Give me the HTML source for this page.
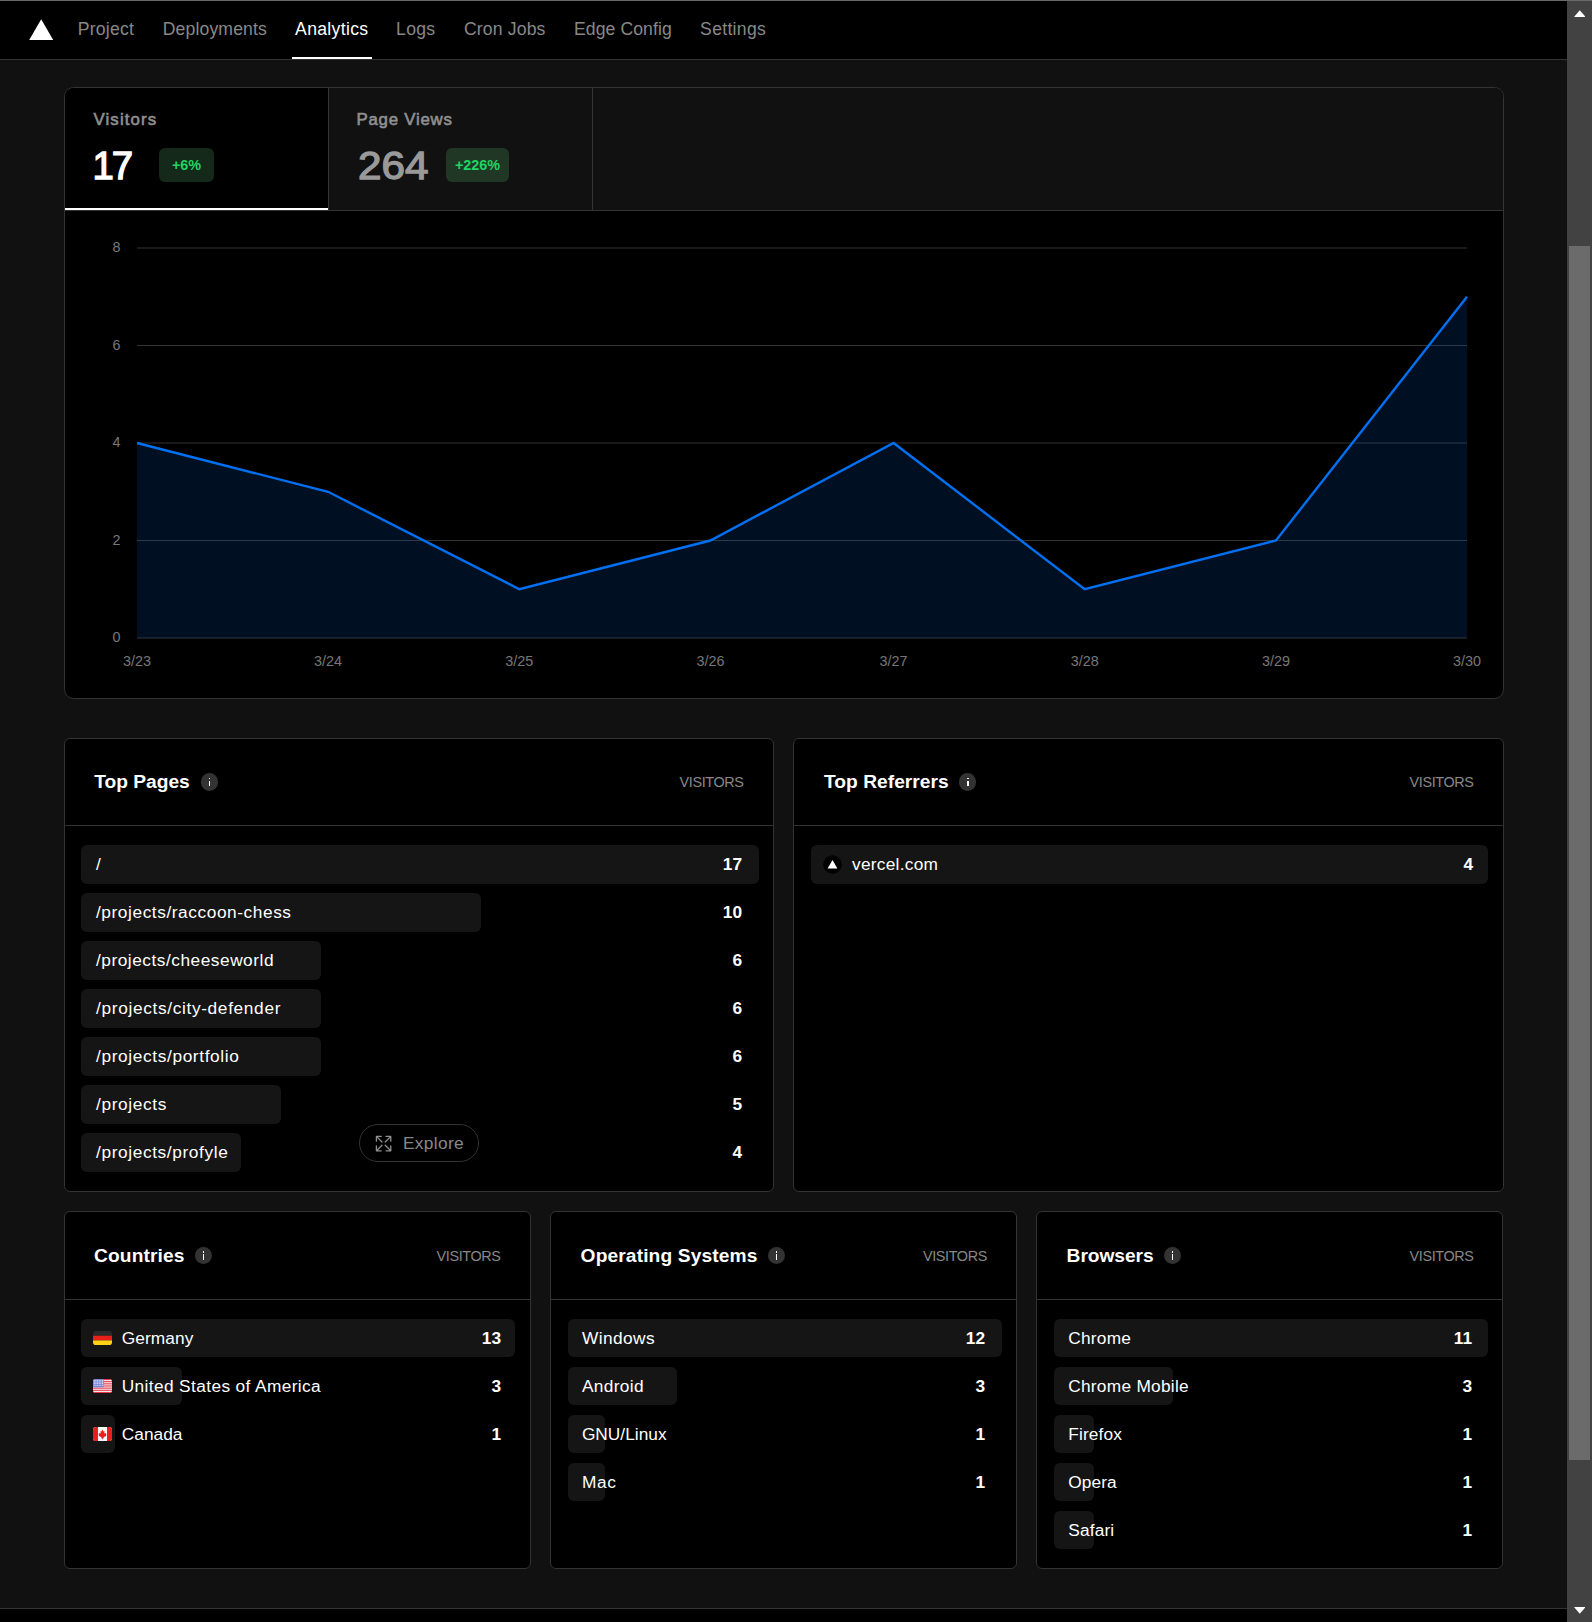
<!DOCTYPE html>
<html lang="en">
<head>
<meta charset="utf-8">
<title>Analytics</title>
<style>
*{box-sizing:border-box;margin:0;padding:0}
html,body{width:1592px;height:1622px;overflow:hidden;background:#111}
body{position:relative;font-family:"Liberation Sans",sans-serif;color:#fff}
.abs{position:absolute}
.t{position:absolute;white-space:nowrap;line-height:20px}
#topline{left:0;top:0;width:1592px;height:1px;background:#67696d}
#hdr{left:0;top:1px;width:1567px;height:59px;background:#000;border-bottom:1px solid #333}
.nav{font-size:17.6px;color:#888;top:18.6px}
.nav.on{color:#fff}
#navline{left:292px;top:57px;width:80px;height:2px;background:#fff}
#sb{left:1567px;top:1px;width:25px;height:1621px;background:#424242}
#sbthumb{left:1569px;top:246px;width:21px;height:1214px;background:#6b6b6b}
#ftr{left:0;top:1608px;width:1567px;height:14px;background:#000;border-top:1px solid #333}
.card{position:absolute;background:#000;border:1px solid #333;border-radius:6px}
.sep{position:absolute;left:0;right:0;height:1px;background:#333}
.title{font-size:19.2px;font-weight:700;color:#fff}
.vis{font-size:14.4px;color:#888;letter-spacing:-.35px}
.info{position:absolute;width:17.4px;height:17.4px;border-radius:50%;background:#333}
.info:before{content:"";position:absolute;left:8px;top:4.6px;width:1.5px;height:1.7px;background:#fff}
.info:after{content:"";position:absolute;left:8px;top:7.7px;width:1.5px;height:5.4px;background:#fff}
.bar{position:absolute;height:38px;background:#151515;border-radius:6px}
.lbl{font-size:17.3px;color:#fff}
.num{font-size:17.3px;font-weight:700;color:#fff;text-align:right}
.mlab{font-size:16.8px;font-weight:400;color:#909090;-webkit-text-stroke:.6px #909090}
.mnum{font-size:38.4px;font-weight:400;line-height:44px;-webkit-text-stroke:1.3px currentColor;paint-order:stroke fill}
.badge{position:absolute;height:34px;border-radius:6px;text-align:center;font-size:14.4px;font-weight:700;color:#20d465;line-height:34px}
.ax{font-size:14.4px;color:#777}
</style>
</head>
<body>
<div id="topline" class="abs"></div>
<div id="hdr" class="abs"></div>
<svg class="abs" style="left:29px;top:19px" width="25" height="22" viewBox="0 0 25 22"><path d="M12.2 0.2 L24.2 21 L0.2 21 Z" fill="#fff"/></svg>
<div class="t nav" id="nav0" style="left:77.7px;letter-spacing:0.256px;">Project</div>
<div class="t nav" id="nav1" style="left:162.7px;letter-spacing:0.151px;">Deployments</div>
<div class="t nav on" id="nav2" style="left:295.1px;letter-spacing:0.324px;">Analytics</div>
<div class="t nav" id="nav3" style="left:396.1px;letter-spacing:0.248px;">Logs</div>
<div class="t nav" id="nav4" style="left:463.9px;letter-spacing:0.164px;">Cron Jobs</div>
<div class="t nav" id="nav5" style="left:574.0px;letter-spacing:0.086px;">Edge Config</div>
<div class="t nav" id="nav6" style="left:700.1px;letter-spacing:0.303px;">Settings</div>
<div id="navline" class="abs"></div>
<div class="card" style="left:64px;top:87px;width:1440px;height:612px;overflow:hidden;border-radius:9.6px">
<div class="abs" style="left:0;top:0;width:1438px;height:122px;background:#111"></div>
<div class="abs" style="left:0;top:0;width:263px;height:122px;background:#000"></div>
<div class="abs" style="left:263px;top:0;width:1px;height:122px;background:#333"></div>
<div class="abs" style="left:527px;top:0;width:1px;height:122px;background:#333"></div>
<div class="abs" style="left:0;top:122px;width:1438px;height:1px;background:#333"></div>
<div class="abs" style="left:0;top:120px;width:263px;height:2px;background:#fff"></div>
</div>
<div class="t mlab" id="m_vis" style="left:93.5px;top:109.7px;letter-spacing:1.126px;">Visitors</div>
<div class="t mnum" id="m_17" style="left:92.5px;top:143.9px;color:#fff;letter-spacing:-2.003px;">17</div>
<div class="badge" style="left:159px;top:148px;width:55px;background:#14291a"><span>+6%</span></div>
<div class="t mlab" id="m_pv" style="left:356.5px;top:109.7px;letter-spacing:0.786px;">Page Views</div>
<div class="t mnum" id="m_264" style="left:357.6px;top:143.6px;color:#999;transform:scaleX(1.1);transform-origin:0 0;letter-spacing:0.000px;">264</div>
<div class="badge" style="left:446px;top:148px;width:63px;background:#213726"><span>+226%</span></div>
<svg class="abs" style="left:0;top:211px" width="1567" height="487" viewBox="0 211 1567 487">
<line x1="137" x2="1467" y1="638.0" y2="638.0" stroke="#333" stroke-width="1.2"/><line x1="137" x2="1467" y1="540.5" y2="540.5" stroke="#333" stroke-width="1.2"/><line x1="137" x2="1467" y1="443.0" y2="443.0" stroke="#333" stroke-width="1.2"/><line x1="137" x2="1467" y1="345.5" y2="345.5" stroke="#333" stroke-width="1.2"/><line x1="137" x2="1467" y1="248.0" y2="248.0" stroke="#333" stroke-width="1.2"/>
<polygon points="137.0,443.0 328.1,491.8 519.3,589.2 710.4,540.5 893.6,443.0 1084.7,589.2 1275.9,540.5 1467.0,296.8 1467,638.0 137,638.0" fill="rgba(0,112,243,0.14)"/>
<polyline points="137.0,443.0 328.1,491.8 519.3,589.2 710.4,540.5 893.6,443.0 1084.7,589.2 1275.9,540.5 1467.0,296.8" fill="none" stroke="#0070f3" stroke-width="2.4" stroke-linejoin="miter"/>
</svg>
<div class="t ax" style="left:90px;width:30.5px;text-align:right;top:627.2px">0</div>
<div class="t ax" style="left:90px;width:30.5px;text-align:right;top:529.7px">2</div>
<div class="t ax" style="left:90px;width:30.5px;text-align:right;top:432.2px">4</div>
<div class="t ax" style="left:90px;width:30.5px;text-align:right;top:334.7px">6</div>
<div class="t ax" style="left:90px;width:30.5px;text-align:right;top:237.2px">8</div>
<div class="t ax" style="left:107.0px;width:60px;text-align:center;top:651px">3/23</div>
<div class="t ax" style="left:298.1px;width:60px;text-align:center;top:651px">3/24</div>
<div class="t ax" style="left:489.3px;width:60px;text-align:center;top:651px">3/25</div>
<div class="t ax" style="left:680.4px;width:60px;text-align:center;top:651px">3/26</div>
<div class="t ax" style="left:863.6px;width:60px;text-align:center;top:651px">3/27</div>
<div class="t ax" style="left:1054.7px;width:60px;text-align:center;top:651px">3/28</div>
<div class="t ax" style="left:1245.9px;width:60px;text-align:center;top:651px">3/29</div>
<div class="t ax" style="left:1437.0px;width:60px;text-align:center;top:651px">3/30</div>
<div class="card" style="left:64px;top:738px;width:710px;height:454px"><div class="sep" style="top:86px"></div></div>
<div class="t title" id="tp_t" style="left:94.2px;top:772px;letter-spacing:-0.001px;">Top Pages</div>
<div class="info" style="left:200.7px;top:773.2px"></div>
<div class="t vis" style="right:848.4px;top:772px">VISITORS</div>
<div class="bar" style="left:81px;top:845px;width:677.8px;height:39px"></div>
<div class="t lbl" id="tp_r0" style="left:96.0px;top:853.8px;letter-spacing:0.000px;">/</div>
<div class="t num" style="right:850px;top:854.4px">17</div>
<div class="bar" style="left:81px;top:893px;width:400.4px;height:39px"></div>
<div class="t lbl" id="tp_r1" style="left:96.0px;top:901.8px;letter-spacing:0.568px;">/projects/raccoon-chess</div>
<div class="t num" style="right:850px;top:902.4px">10</div>
<div class="bar" style="left:81px;top:941px;width:239.9px;height:39px"></div>
<div class="t lbl" id="tp_r2" style="left:96.0px;top:949.8px;letter-spacing:0.518px;">/projects/cheeseworld</div>
<div class="t num" style="right:850px;top:950.4px">6</div>
<div class="bar" style="left:81px;top:989px;width:239.9px;height:39px"></div>
<div class="t lbl" id="tp_r3" style="left:96.0px;top:997.8px;letter-spacing:0.654px;">/projects/city-defender</div>
<div class="t num" style="right:850px;top:998.4px">6</div>
<div class="bar" style="left:81px;top:1037px;width:239.9px;height:39px"></div>
<div class="t lbl" id="tp_r4" style="left:96.0px;top:1045.8px;letter-spacing:0.628px;">/projects/portfolio</div>
<div class="t num" style="right:850px;top:1046.4px">6</div>
<div class="bar" style="left:81px;top:1085px;width:200.1px;height:39px"></div>
<div class="t lbl" id="tp_r5" style="left:96.0px;top:1093.8px;letter-spacing:0.623px;">/projects</div>
<div class="t num" style="right:850px;top:1094.4px">5</div>
<div class="bar" style="left:81px;top:1133px;width:160.2px;height:39px"></div>
<div class="t lbl" id="tp_r6" style="left:96.0px;top:1141.8px;letter-spacing:0.613px;">/projects/profyle</div>
<div class="t num" style="right:850px;top:1142.4px">4</div>
<div class="abs" style="left:359px;top:1124px;width:120px;height:38px;border:1px solid #333;border-radius:19px"></div>
<svg class="abs" style="left:373.9px;top:1133.9px" width="19.2" height="19.2" viewBox="0 0 24 24" fill="none" stroke="#8f8f8f" stroke-width="1.6" stroke-linecap="round" stroke-linejoin="round"><path d="M15 3h6v6M9 21H3v-6M21 3l-7 7M3 21l7-7M9 3H3v6M15 21h6v-6M3 3l7 7M21 21l-7-7"/></svg>
<div class="t lbl" id="explore" style="left:403px;top:1133.4px;color:#888;letter-spacing:0.332px;">Explore</div>
<div class="card" style="left:793px;top:738px;width:711px;height:454px"><div class="sep" style="top:86px"></div></div>
<div class="t title" id="tr_t" style="left:824.0px;top:772px;letter-spacing:0.024px;">Top Referrers</div>
<div class="info" style="left:959.1px;top:773.2px"></div>
<div class="t vis" style="right:118.40000000000009px;top:772px">VISITORS</div>
<div class="bar" style="left:811px;top:845px;width:677.0px;height:39px"></div>
<div class="t lbl" id="tr_r0" style="left:852.0px;top:853.8px;letter-spacing:0.273px;">vercel.com</div>
<div class="t num" style="right:119px;top:854.4px">4</div>
<svg class="abs" style="left:823px;top:855px" width="19" height="19" viewBox="0 0 19 19"><circle cx="9.5" cy="9.5" r="9.3" fill="#000"/><path d="M9.5 5 L14.4 13.4 H4.6 Z" fill="#fff"/></svg>
<div class="card" style="left:64px;top:1211px;width:467px;height:358px"><div class="sep" style="top:87px"></div></div>
<div class="t title" id="co_t" style="left:94.0px;top:1246px;letter-spacing:0.117px;">Countries</div>
<div class="info" style="left:194.8px;top:1246.8px"></div>
<div class="t vis" style="right:1091.4px;top:1246px">VISITORS</div>
<div class="bar" style="left:81px;top:1319px;width:434.0px;height:38px"></div>
<svg class="abs" style="left:93px;top:1331px" width="19" height="14" viewBox="0 0 19 14"><clipPath id="fc"><rect width="19" height="14" rx="2.8"/></clipPath><g clip-path="url(#fc)"><rect width="19" height="4.7" fill="#2a2a2a"/><rect y="4.7" width="19" height="4.7" fill="#e8201c"/><rect y="9.4" width="19" height="4.6" fill="#fdd116"/></g></svg>
<div class="t lbl" id="co_r0" style="left:121.7px;top:1327.8px;letter-spacing:0.120px;">Germany</div>
<div class="t num" style="right:1091px;top:1328.4px">13</div>
<div class="bar" style="left:81px;top:1367px;width:100.9px;height:38px"></div>
<svg class="abs" style="left:93px;top:1379px" width="19" height="14" viewBox="0 0 19 14"><g clip-path="url(#fc)"><rect width="19" height="14" fill="#f5f5f5"/><rect y="0.00" width="19" height="1.08" fill="#e8354a"/><rect y="2.15" width="19" height="1.08" fill="#e8354a"/><rect y="4.31" width="19" height="1.08" fill="#e8354a"/><rect y="6.46" width="19" height="1.08" fill="#e8354a"/><rect y="8.62" width="19" height="1.08" fill="#e8354a"/><rect y="10.77" width="19" height="1.08" fill="#e8354a"/><rect y="12.92" width="19" height="1.08" fill="#e8354a"/><rect width="10.6" height="8.3" fill="#7583d4"/><circle cx="1.30" cy="1.20" r=".55" fill="#fff" opacity=".85"/><circle cx="1.30" cy="2.90" r=".55" fill="#fff" opacity=".85"/><circle cx="1.30" cy="4.60" r=".55" fill="#fff" opacity=".85"/><circle cx="1.30" cy="6.30" r=".55" fill="#fff" opacity=".85"/><circle cx="2.95" cy="1.20" r=".55" fill="#fff" opacity=".85"/><circle cx="2.95" cy="2.90" r=".55" fill="#fff" opacity=".85"/><circle cx="2.95" cy="4.60" r=".55" fill="#fff" opacity=".85"/><circle cx="2.95" cy="6.30" r=".55" fill="#fff" opacity=".85"/><circle cx="4.60" cy="1.20" r=".55" fill="#fff" opacity=".85"/><circle cx="4.60" cy="2.90" r=".55" fill="#fff" opacity=".85"/><circle cx="4.60" cy="4.60" r=".55" fill="#fff" opacity=".85"/><circle cx="4.60" cy="6.30" r=".55" fill="#fff" opacity=".85"/><circle cx="6.25" cy="1.20" r=".55" fill="#fff" opacity=".85"/><circle cx="6.25" cy="2.90" r=".55" fill="#fff" opacity=".85"/><circle cx="6.25" cy="4.60" r=".55" fill="#fff" opacity=".85"/><circle cx="6.25" cy="6.30" r=".55" fill="#fff" opacity=".85"/><circle cx="7.90" cy="1.20" r=".55" fill="#fff" opacity=".85"/><circle cx="7.90" cy="2.90" r=".55" fill="#fff" opacity=".85"/><circle cx="7.90" cy="4.60" r=".55" fill="#fff" opacity=".85"/><circle cx="7.90" cy="6.30" r=".55" fill="#fff" opacity=".85"/><circle cx="9.55" cy="1.20" r=".55" fill="#fff" opacity=".85"/><circle cx="9.55" cy="2.90" r=".55" fill="#fff" opacity=".85"/><circle cx="9.55" cy="4.60" r=".55" fill="#fff" opacity=".85"/><circle cx="9.55" cy="6.30" r=".55" fill="#fff" opacity=".85"/></g></svg>
<div class="t lbl" id="co_r1" style="left:121.7px;top:1375.8px;letter-spacing:0.383px;">United States of America</div>
<div class="t num" style="right:1091px;top:1376.4px">3</div>
<div class="bar" style="left:81px;top:1415px;width:34.1px;height:38px"></div>
<svg class="abs" style="left:93px;top:1427px" width="19" height="14" viewBox="0 0 19 14"><g clip-path="url(#fc)"><rect width="19" height="14" fill="#f7f9fc"/><rect width="5" height="14" fill="#e8201c"/><rect x="14" width="5" height="14" fill="#e8201c"/><path d="M9.5 2.6 L10.5 4.6 L11.6 4.1 L11.2 6.4 L12.4 5.8 L12.7 6.8 L13.6 6.7 L12.9 8.3 L13.4 8.8 L10.6 10.2 L10.8 11.4 L9.8 11.2 L9.8 12.4 L9.2 12.4 L9.2 11.2 L8.2 11.4 L8.4 10.2 L5.6 8.8 L6.1 8.3 L5.4 6.7 L6.3 6.8 L6.6 5.8 L7.8 6.4 L7.4 4.1 L8.5 4.6 Z" fill="#e8201c"/></g></svg>
<div class="t lbl" id="co_r2" style="left:121.7px;top:1423.8px;letter-spacing:0.051px;">Canada</div>
<div class="t num" style="right:1091px;top:1424.4px">1</div>
<div class="card" style="left:550px;top:1211px;width:467px;height:358px"><div class="sep" style="top:87px"></div></div>
<div class="t title" id="os_t" style="left:580.6px;top:1246px;letter-spacing:0.119px;">Operating Systems</div>
<div class="info" style="left:767.5px;top:1246.8px"></div>
<div class="t vis" style="right:605px;top:1246px">VISITORS</div>
<div class="bar" style="left:568px;top:1319px;width:434.0px;height:38px"></div>
<div class="t lbl" id="os_r0" style="left:581.9px;top:1327.8px;letter-spacing:0.432px;">Windows</div>
<div class="t num" style="right:607px;top:1328.4px">12</div>
<div class="bar" style="left:568px;top:1367px;width:109.2px;height:38px"></div>
<div class="t lbl" id="os_r1" style="left:581.9px;top:1375.8px;letter-spacing:0.354px;">Android</div>
<div class="t num" style="right:607px;top:1376.4px">3</div>
<div class="bar" style="left:568px;top:1415px;width:36.9px;height:38px"></div>
<div class="t lbl" id="os_r2" style="left:581.9px;top:1423.8px;letter-spacing:0.021px;">GNU/Linux</div>
<div class="t num" style="right:607px;top:1424.4px">1</div>
<div class="bar" style="left:568px;top:1463px;width:36.9px;height:38px"></div>
<div class="t lbl" id="os_r3" style="left:581.9px;top:1471.8px;letter-spacing:0.722px;">Mac</div>
<div class="t num" style="right:607px;top:1472.4px">1</div>
<div class="card" style="left:1036px;top:1211px;width:467px;height:358px"><div class="sep" style="top:87px"></div></div>
<div class="t title" id="br_t" style="left:1066.6px;top:1246px;letter-spacing:-0.065px;">Browsers</div>
<div class="info" style="left:1163.6px;top:1246.8px"></div>
<div class="t vis" style="right:118.40000000000009px;top:1246px">VISITORS</div>
<div class="bar" style="left:1054px;top:1319px;width:434.0px;height:38px"></div>
<div class="t lbl" id="br_r0" style="left:1068.2px;top:1327.8px;letter-spacing:0.246px;">Chrome</div>
<div class="t num" style="right:120px;top:1328.4px">11</div>
<div class="bar" style="left:1054px;top:1367px;width:119.1px;height:38px"></div>
<div class="t lbl" id="br_r1" style="left:1068.2px;top:1375.8px;letter-spacing:0.277px;">Chrome Mobile</div>
<div class="t num" style="right:120px;top:1376.4px">3</div>
<div class="bar" style="left:1054px;top:1415px;width:40.2px;height:38px"></div>
<div class="t lbl" id="br_r2" style="left:1068.2px;top:1423.8px;letter-spacing:0.162px;">Firefox</div>
<div class="t num" style="right:120px;top:1424.4px">1</div>
<div class="bar" style="left:1054px;top:1463px;width:40.2px;height:38px"></div>
<div class="t lbl" id="br_r3" style="left:1068.2px;top:1471.8px;letter-spacing:0.117px;">Opera</div>
<div class="t num" style="right:120px;top:1472.4px">1</div>
<div class="bar" style="left:1054px;top:1511px;width:40.2px;height:38px"></div>
<div class="t lbl" id="br_r4" style="left:1068.2px;top:1519.8px;letter-spacing:0.169px;">Safari</div>
<div class="t num" style="right:120px;top:1520.4px">1</div>
<div id="sb" class="abs"></div><div id="sbthumb" class="abs"></div>
<svg class="abs" style="left:1573.8px;top:10.4px" width="11.6" height="7" viewBox="0 0 11.6 7"><path d="M0 7 L5.8 0.3 L11.6 7 Z" fill="#fff"/></svg>
<svg class="abs" style="left:1573.8px;top:1606.8px" width="11.6" height="7" viewBox="0 0 11.6 7"><path d="M0 0 L5.8 6.7 L11.6 0 Z" fill="#fff"/></svg>
<div id="ftr" class="abs"></div>
</body>
</html>
